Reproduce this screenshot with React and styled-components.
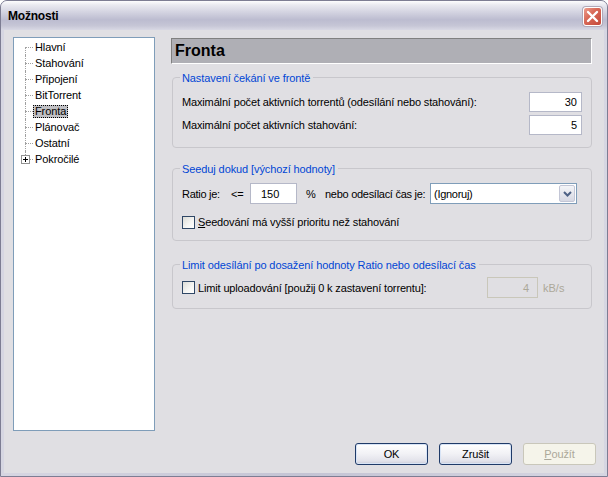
import React from "react";
import styled, { createGlobalStyle } from "styled-components";

const GlobalStyle = createGlobalStyle`
  html, body {
    margin: 0;
    padding: 0;
    background: #ffffff;
  }
  body {
    font-family: "Liberation Sans", Arial, sans-serif;
    font-size: 11px;
    color: #000000;
  }
`;

const treeItems = [
  "Hlavní",
  "Stahování",
  "Připojení",
  "BitTorrent",
  "Fronta",
  "Plánovač",
  "Ostatní",
  "Pokročilé",
];

export default function App() {
  return (
    <>
      <GlobalStyle />
      <Window>
        <TitleBar>
          <Title>Možnosti</Title>
          <CloseButton>
            <svg width="13" height="13" viewBox="0 0 13 13">
              <path
                d="M2 2 L11 11 M11 2 L2 11"
                stroke="#ffffff"
                strokeWidth="2.4"
                strokeLinecap="round"
              />
            </svg>
          </CloseButton>
        </TitleBar>

        <Frame>
          <Dialog>
            <MainRow>
              <Tree>
                {treeItems.map((t, i) => (
                  <TreeItem
                    key={t}
                    $first={i === 0}
                    $last={i === treeItems.length - 1}
                  >
                    {i === treeItems.length - 1 && (
                      <PlusBox>
                        <svg width="7" height="7" viewBox="0 0 7 7">
                          <path d="M1 3.5 H6 M3.5 1 V6" stroke="#000" strokeWidth="1" />
                        </svg>
                      </PlusBox>
                    )}
                    <TreeLabel $selected={t === "Fronta"}>{t}</TreeLabel>
                  </TreeItem>
                ))}
              </Tree>

              <Content>
                <Header>Fronta</Header>

                <Group $top={13} $bottom={12}>
                  <Legend $after={7}>Nastavení čekání ve frontě</Legend>
                  <FieldRow>
                    <span>Maximální počet aktivních torrentů (odesílání nebo stahování):</span>
                    <NumBox>30</NumBox>
                  </FieldRow>
                  <FieldRow>
                    <span>Maximální počet aktivních stahování:</span>
                    <NumBox>5</NumBox>
                  </FieldRow>
                </Group>

                <Group $top={20} $bottom={10}>
                  <Legend $after={7}>Seeduj dokud [výchozí hodnoty]</Legend>
                  <RatioRow>
                    <Fixed $w={49}>Ratio je:</Fixed>
                    <Fixed $w={19}>&lt;=</Fixed>
                    <TextBox>150</TextBox>
                    <Fixed $w={28} $pl={9}>%</Fixed>
                    <Fixed $w={105}>nebo odesílací čas je:</Fixed>
                    <Select>
                      <SelectValue>(Ignoruj)</SelectValue>
                      <DropButton>
                        <svg width="9" height="6" viewBox="0 0 9 6">
                          <path
                            d="M1 1 L4.5 4.5 L8 1"
                            stroke="#4d6185"
                            strokeWidth="2"
                            fill="none"
                          />
                        </svg>
                      </DropButton>
                    </Select>
                  </RatioRow>
                  <CheckRow $mt={10}>
                    <CheckBox />
                    <span>
                      <u>S</u>eedování má vyšší prioritu než stahování
                    </span>
                  </CheckRow>
                </Group>

                <Group $top={23} $bottom={10}>
                  <Legend $after={5}>
                    Limit odesílání po dosažení hodnoty Ratio nebo odesílací čas
                  </Legend>
                  <LimitRow>
                    <CheckRow>
                      <CheckBox />
                      <span>Limit uploadování [použij 0 k zastavení torrentu]:</span>
                    </CheckRow>
                    <DisabledBox>4</DisabledBox>
                    <Unit>kB/s</Unit>
                  </LimitRow>
                </Group>
              </Content>
            </MainRow>

            <Footer>
              <Button>OK</Button>
              <Button>Zrušit</Button>
              <Button disabled>
                <u>P</u>oužít
              </Button>
            </Footer>
          </Dialog>
        </Frame>
      </Window>
    </>
  );
}

const Window = styled.div`
  width: 608px;
  height: 477px;
  box-sizing: border-box;
  display: flex;
  flex-direction: column;
  border: 1px solid #7d7d93;
  border-radius: 7px 7px 0 0;
  overflow: hidden;
  background: #c4c4d4;
`;

const TitleBar = styled.div`
  height: 29px;
  flex-shrink: 0;
  display: flex;
  align-items: center;
  justify-content: space-between;
  padding: 0 5px 0 7px;
  background: linear-gradient(
    to bottom,
    #fdfdfe 0%,
    #e9e9f0 14%,
    #d2d2e0 40%,
    #bcbcd0 65%,
    #c6c6d6 85%,
    #d8d8e4 100%
  );
`;

const Title = styled.div`
  font-family: "Liberation Sans", Arial, sans-serif;
  font-weight: 700;
  font-size: 12px;
  letter-spacing: -0.2px;
  color: #000000;
  padding-top: 1px;
`;

const CloseButton = styled.div`
  width: 19px;
  height: 19px;
  margin-top: 1px;
  box-sizing: border-box;
  border: 1px solid #ffffff;
  border-radius: 3px;
  background: linear-gradient(135deg, #ec9d8e 0%, #d86a58 40%, #c5473a 100%);
  box-shadow: 0 0 0 1px #b0a8b8;
  display: flex;
  align-items: center;
  justify-content: center;
`;

const Frame = styled.div`
  flex: 1;
  display: flex;
  padding: 0 3px 3px 3px;
  background: linear-gradient(to right, #d6d6e2, #c4c4d4 50%, #d6d6e2);
`;

const Dialog = styled.div`
  flex: 1;
  display: flex;
  flex-direction: column;
  background: #e0dfe3;
  padding: 7px 12px 8px 9px;
`;

const MainRow = styled.div`
  height: 394px;
  display: flex;
  gap: 16px;
`;

const Tree = styled.div`
  width: 142px;
  box-sizing: border-box;
  border: 1px solid #7f9db9;
  background: #ffffff;
  padding-top: 1px;
`;

const TreeItem = styled.div`
  position: relative;
  height: 16px;
  display: flex;
  align-items: center;
  padding-left: 19px;

  &::before {
    content: "";
    position: absolute;
    left: 11px;
    width: 8px;
    top: 8px;
    border-top: 1px dotted #a0a0a0;
  }

  &::after {
    content: "";
    position: absolute;
    left: 11px;
    top: ${(p) => (p.$first ? "8px" : "0")};
    bottom: ${(p) => (p.$last ? "8px" : "0")};
    border-left: 1px dotted #a0a0a0;
  }
`;

const PlusBox = styled.span`
  position: absolute;
  left: 7px;
  top: 4px;
  width: 9px;
  height: 9px;
  box-sizing: border-box;
  border: 1px solid #919191;
  background: #ffffff;
  z-index: 1;
  display: flex;
  align-items: center;
  justify-content: center;
`;

const TreeLabel = styled.span`
  line-height: 13px;
  padding: 0 2px;
  letter-spacing: -0.1px;
  background: ${(p) => (p.$selected ? "#c0c0c4" : "transparent")};
  outline: ${(p) => (p.$selected ? "1px dotted #000" : "none")};
  outline-offset: -1px;
`;

const Content = styled.div`
  flex: 1;
  display: flex;
  flex-direction: column;
`;

const Header = styled.div`
  height: 26px;
  margin-top: 1px;
  box-sizing: border-box;
  background: #afafb5;
  border-top: 1px solid #808080;
  border-left: 1px solid #808080;
  border-bottom: 1px solid #ffffff;
  border-right: 1px solid #ffffff;
  padding-left: 3px;
  display: flex;
  align-items: center;
  font-family: "Liberation Sans", Arial, sans-serif;
  font-weight: 700;
  font-size: 16px;
  color: #000000;
`;

const Group = styled.div`
  margin: ${(p) => p.$top}px 0 0 1px;
  border: 1px solid #c8c7cc;
  border-radius: 4px;
  padding: 0 9px ${(p) => p.$bottom}px 9px;
  display: flex;
  flex-direction: column;
`;

const Legend = styled.div`
  align-self: flex-start;
  margin: -6px 0 ${(p) => p.$after}px -2px;
  padding: 0 3px 0 2px;
  line-height: 13px;
  background: #e0dfe3;
  color: #0046d5;
  letter-spacing: -0.1px;
`;

const FieldRow = styled.div`
  display: flex;
  align-items: center;
  justify-content: space-between;
  letter-spacing: -0.15px;

  & + & {
    margin-top: 3px;
  }
`;

const NumBox = styled.div`
  width: 53px;
  height: 20px;
  box-sizing: border-box;
  border: 1px solid #b5b8c8;
  background: #ffffff;
  display: flex;
  align-items: center;
  justify-content: flex-end;
  padding-right: 4px;
  letter-spacing: 0;
`;

const RatioRow = styled.div`
  display: flex;
  align-items: center;
  letter-spacing: -0.28px;
`;

const Fixed = styled.span`
  width: ${(p) => p.$w}px;
  padding-left: ${(p) => p.$pl || 0}px;
  box-sizing: border-box;
  flex-shrink: 0;
  white-space: nowrap;
`;

const TextBox = styled.div`
  width: 47px;
  height: 21px;
  box-sizing: border-box;
  border: 1px solid #b5b8c8;
  background: #ffffff;
  display: flex;
  align-items: center;
  padding-left: 10px;
  letter-spacing: 0;
`;

const Select = styled.div`
  width: 147px;
  height: 21px;
  box-sizing: border-box;
  border: 1px solid #7f9db9;
  background: #ffffff;
  display: flex;
  align-items: stretch;
  padding: 1px;
`;

const SelectValue = styled.div`
  flex: 1;
  display: flex;
  align-items: center;
  padding-left: 2px;
`;

const DropButton = styled.div`
  width: 16px;
  box-sizing: border-box;
  border: 1px solid #c3c6d6;
  border-radius: 2px;
  background: linear-gradient(to bottom, #f4f5f8, #d6d8e3);
  display: flex;
  align-items: center;
  justify-content: center;
`;

const CheckRow = styled.div`
  display: flex;
  align-items: center;
  gap: 3px;
  height: 16px;
  margin-top: ${(p) => p.$mt || 0}px;
  letter-spacing: -0.15px;
`;

const CheckBox = styled.span`
  width: 13px;
  height: 13px;
  box-sizing: border-box;
  border: 1px solid #2f4766;
  background: linear-gradient(135deg, #dcdcd7 0%, #f6f6f4 60%, #ffffff 100%);
  flex-shrink: 0;
`;

const LimitRow = styled.div`
  display: flex;
  align-items: center;
  height: 21px;
`;

const DisabledBox = styled.div`
  margin-left: auto;
  width: 51px;
  height: 21px;
  box-sizing: border-box;
  border: 1px solid #c9c7ba;
  background: #e0dfe3;
  color: #aca899;
  display: flex;
  align-items: center;
  justify-content: flex-end;
  padding-right: 8px;
`;

const Unit = styled.span`
  color: #aca899;
  margin-left: 5px;
  width: 22px;
  margin-right: 17px;
`;

const Footer = styled.div`
  margin-top: 12px;
  margin-right: -4px;
  display: flex;
  justify-content: flex-end;
  gap: 11px;
`;

const Button = styled.button`
  width: 73px;
  height: 22px;
  box-sizing: border-box;
  padding: 0;
  border-radius: 3px;
  font-family: "Liberation Sans", Arial, sans-serif;
  font-size: 11px;
  letter-spacing: -0.1px;
  color: #000000;
  border: 1px solid #1f3a68;
  background: linear-gradient(to bottom, #ffffff 0%, #f1f1f5 50%, #e2e2ea 85%, #c9cbd8 100%);
  box-shadow: inset 0 0 0 1px #d8e4f6;

  &:disabled {
    color: #aca899;
    border-color: #c9c7ba;
    background: #f5f4ea;
    box-shadow: none;
  }
`;
